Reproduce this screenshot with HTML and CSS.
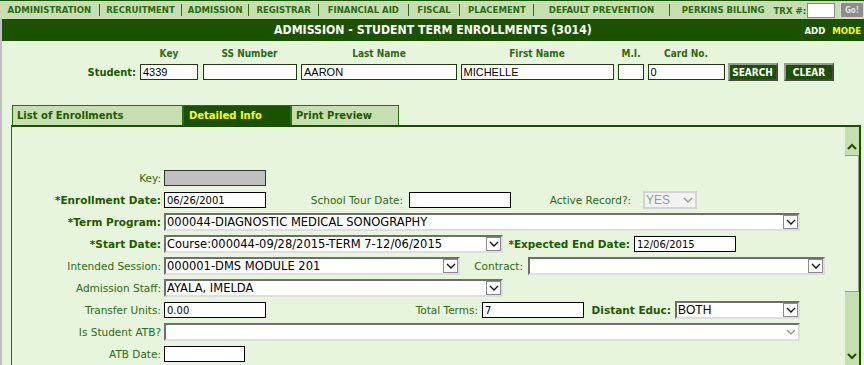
FILE: index.html
```html
<!DOCTYPE html>
<html lang="en">
<head>
  <meta charset="UTF-8">
  <title>Admission - Student Term Enrollments</title>
  <link rel="stylesheet" href="styles.css">
</head>
<body>

  <div class="topnav">
    <a class="nav-item sep">ADMINISTRATION</a>
    <a class="nav-item sep">RECRUITMENT</a>
    <a class="nav-item sep">ADMISSION</a>
    <a class="nav-item sep">REGISTRAR</a>
    <a class="nav-item sep">FINANCIAL AID</a>
    <a class="nav-item sep">FISCAL</a>
    <a class="nav-item sep">PLACEMENT</a>
    <a class="nav-item sep">DEFAULT PREVENTION</a>
    <a class="nav-item perkins">PERKINS BILLING</a>
    <span class="trx-label">TRX #:</span>
    <input class="trx-input" type="text">
    <button class="go-btn">Go!</button>
  </div>

  <div class="main">
    <div class="titlebar">
      <span></span>
      <h1>ADMISSION - STUDENT TERM ENROLLMENTS (3014)</h1>
      <span class="mode">ADD <b>MODE</b></span>
    </div>

    <div class="search">
      <span></span>
      <span class="col-head">Key</span>
      <span class="col-head">SS Number</span>
      <span class="col-head">Last Name</span>
      <span class="col-head">First Name</span>
      <span class="col-head">M.I.</span>
      <span class="col-head">Card No.</span>
      <span></span>
      <span></span>

      <label class="student-lbl">Student:</label>
      <input class="s-input s-key" type="text" value="4339">
      <input class="s-input s-ssn" type="text" value="">
      <input class="s-input s-last" type="text" value="AARON">
      <input class="s-input s-first" type="text" value="MICHELLE">
      <input class="s-input s-mi" type="text" value="">
      <input class="s-input s-card" type="text" value="0">
      <button class="dark-btn">SEARCH</button>
      <button class="dark-btn">CLEAR</button>
    </div>

    <div class="tabs">
      <div class="tab tab-list">List of Enrollments</div>
      <div class="tab tab-active">Detailed Info</div>
      <div class="tab tab-print">Print Preview</div>
    </div>

    <div class="panel">
      <div class="form">

        <div class="row">
          <label class="lbl">Key:</label>
          <input class="txt txt-gray" type="text" disabled>
        </div>

        <div class="row">
          <label class="lbl req">*Enrollment Date:</label>
          <input class="txt" type="text" value="06/26/2001">
          <label class="lbl2 l-tour">School Tour Date:</label>
          <input class="txt" type="text" value="">
          <label class="lbl2 l-active">Active Record?:</label>
          <div class="sel sel-active disabled">
            <span class="sel-val">YES</span>
            <span class="arrow flat"><svg width="10" height="6" viewBox="0 0 10 6"><path d="M1 1 L5 5 L9 1" fill="none" stroke="#999" stroke-width="1.4"/></svg></span>
          </div>
        </div>

        <div class="row">
          <label class="lbl req">*Term Program:</label>
          <div class="sel sel-full">
            <span class="sel-val">000044-DIAGNOSTIC MEDICAL SONOGRAPHY</span>
            <span class="arrow"><svg width="10" height="6" viewBox="0 0 10 6"><path d="M1 1 L5 5 L9 1" fill="none" stroke="#111" stroke-width="1.4"/></svg></span>
          </div>
        </div>

        <div class="row">
          <label class="lbl req">*Start Date:</label>
          <div class="sel sel-mid">
            <span class="sel-val">Course:000044-09/28/2015-TERM 7-12/06/2015</span>
            <span class="arrow"><svg width="10" height="6" viewBox="0 0 10 6"><path d="M1 1 L5 5 L9 1" fill="none" stroke="#111" stroke-width="1.4"/></svg></span>
          </div>
          <label class="lbl2 req l-end">*Expected End Date:</label>
          <input class="txt" type="text" value="12/06/2015">
        </div>

        <div class="row">
          <label class="lbl">Intended Session:</label>
          <div class="sel sel-session">
            <span class="sel-val">000001-DMS MODULE 201</span>
            <span class="arrow"><svg width="10" height="6" viewBox="0 0 10 6"><path d="M1 1 L5 5 L9 1" fill="none" stroke="#111" stroke-width="1.4"/></svg></span>
          </div>
          <label class="lbl2 l-contract">Contract:</label>
          <div class="sel sel-contract">
            <span class="sel-val"></span>
            <span class="arrow"><svg width="10" height="6" viewBox="0 0 10 6"><path d="M1 1 L5 5 L9 1" fill="none" stroke="#111" stroke-width="1.4"/></svg></span>
          </div>
        </div>

        <div class="row">
          <label class="lbl">Admission Staff:</label>
          <div class="sel sel-mid">
            <span class="sel-val">AYALA, IMELDA</span>
            <span class="arrow"><svg width="10" height="6" viewBox="0 0 10 6"><path d="M1 1 L5 5 L9 1" fill="none" stroke="#111" stroke-width="1.4"/></svg></span>
          </div>
        </div>

        <div class="row">
          <label class="lbl">Transfer Units:</label>
          <input class="txt" type="text" value="0.00">
          <label class="lbl2 l-terms">Total Terms:</label>
          <input class="txt" type="text" value="7">
          <label class="lbl2 req l-distant">Distant Educ:</label>
          <div class="sel sel-distant">
            <span class="sel-val arial">BOTH</span>
            <span class="arrow"><svg width="10" height="6" viewBox="0 0 10 6"><path d="M1 1 L5 5 L9 1" fill="none" stroke="#111" stroke-width="1.4"/></svg></span>
          </div>
        </div>

        <div class="row">
          <label class="lbl">Is Student ATB?</label>
          <div class="sel sel-full">
            <span class="sel-val"></span>
            <span class="arrow flat"><svg width="10" height="6" viewBox="0 0 10 6"><path d="M1 1 L5 5 L9 1" fill="none" stroke="#999" stroke-width="1.4"/></svg></span>
          </div>
        </div>

        <div class="row">
          <label class="lbl">ATB Date:</label>
          <input class="txt txt-short" type="text" value="">
        </div>

      </div>

      <div class="scrollbar">
        <div class="sb-up"><svg width="10" height="7" viewBox="0 0 10 7"><path d="M1 6 L5 2 L9 6" fill="none" stroke="#1a5200" stroke-width="2"/></svg></div>
        <div class="sb-thumb"></div>
        <div class="sb-track"></div>
        <div class="sb-down"><svg width="10" height="7" viewBox="0 0 10 7"><path d="M1 1 L5 5 L9 1" fill="none" stroke="#1a5200" stroke-width="2"/></svg></div>
      </div>
    </div>
  </div>

</body>
</html>
```

FILE: styles.css
```css
* {
  box-sizing: border-box;
}

body {
  margin: 0;
  height: 365px;
  overflow: hidden;
  display: flex;
  flex-direction: column;
  background-color: #e6f5dc;
  font-family: "DejaVu Sans", sans-serif;
}

/* top menu */
.topnav {
  height: 19px;
  display: flex;
  align-items: center;
  background-color: #c6dfb0;
  border-top: 1px solid #1a5200;
  font-family: "DejaVu Sans Condensed", "DejaVu Sans", sans-serif;
  font-size: 9.5px;
  font-weight: bold;
  color: #2d6b14;
  white-space: nowrap;
}

.nav-item {
  line-height: 12px;
  text-align: center;
}

.nav-item.sep {
  border-right: 1px solid #2d6b14;
}

.nav-item:nth-child(1) { width: 100px; }
.nav-item:nth-child(2) { width: 83px; }
.nav-item:nth-child(3) { width: 67px; }
.nav-item:nth-child(4) { width: 70px; }
.nav-item:nth-child(5) { width: 90px; }
.nav-item:nth-child(6) { width: 52px; }
.nav-item:nth-child(7) { width: 74px; }
.nav-item:nth-child(8) { width: 136px; }

.nav-item.perkins {
  padding: 0 9px 0 12px;
  text-align: left;
}

.trx-label {
  margin-right: 1px;
}

.trx-input {
  width: 28px;
  height: 15px;
  border: 1px solid #888;
  background: #fff;
  padding: 0;
}

.go-btn {
  width: 24px;
  height: 16px;
  margin-left: 5px;
  padding: 0;
  background-color: #8c8c8c;
  border: 1px solid #ddd;
  color: #e0e0e0;
  font-family: inherit;
  font-size: 8px;
  font-weight: bold;
}

.main {
  flex: 1;
  display: flex;
  flex-direction: column;
  border-left: 2px solid #c0c0c0;
}

/* title */
.titlebar {
  height: 22px;
  display: grid;
  grid-template-columns: 1fr auto 1fr;
  align-items: center;
  background-color: #1a5200;
  color: #fff;
}

.titlebar h1 {
  margin: 0;
  font-family: "DejaVu Sans Condensed", "DejaVu Sans", sans-serif;
  font-size: 12.2px;
  font-weight: bold;
}

.mode {
  justify-self: end;
  padding-right: 3px;
  font-family: "DejaVu Sans Condensed", "DejaVu Sans", sans-serif;
  font-size: 9.5px;
  font-weight: bold;
}

.mode b {
  color: #ffff00;
  margin-left: 4px;
}

/* student search */
.search {
  display: grid;
  grid-template-columns: 136px 62px 99px 160px 156px 32px 78px 55px 58px;
  grid-template-rows: 12px 18px;
  row-gap: 4px;
  align-items: center;
  justify-items: center;
  padding-top: 6px;
  font-family: "DejaVu Sans Condensed", "DejaVu Sans", sans-serif;
}

.col-head {
  font-size: 10px;
  font-weight: bold;
  color: #2d6b14;
}

.student-lbl {
  justify-self: end;
  padding-right: 2px;
  font-size: 11px;
  font-weight: bold;
  color: #1f5a00;
}

.s-input {
  height: 16px;
  padding: 0 2px;
  border: 1px solid #1f3a10;
  background: #fff;
  font-family: "Liberation Sans", Arial, sans-serif;
  font-size: 11px;
}

.s-key { width: 58px; }
.s-ssn { width: 94px; }
.s-last { width: 156px; }
.s-first { width: 153px; }
.s-mi { width: 26px; }
.s-card { width: 77px; }

.dark-btn {
  width: 50px;
  height: 18px;
  padding: 0;
  background-color: #1a5200;
  border: 2px outset #9a9a9a;
  color: #fff;
  font-family: inherit;
  font-size: 10px;
  font-weight: bold;
}

/* tabs */
.tabs {
  display: flex;
  margin-top: 24px;
  margin-left: 10px;
  height: 20px;
}

.tab {
  height: 20px;
  padding: 4px 0 0 4px;
  border: 1px solid #2d6b14;
  border-bottom: none;
  background-color: #c6dfb0;
  color: #1f5a00;
  font-size: 10px;
  font-weight: bold;
}

.tab-list { width: 171px; }
.tab-active {
  width: 108px;
  background-color: #1a5200;
  color: #ffff00;
  padding-left: 5px;
}
.tab-print { width: 108px; }

/* panel */
.panel {
  flex: 1;
  display: flex;
  width: 850px;
  margin-left: 9px;
  border-top: 2px solid #1a5200;
  border-left: 1px solid #2d6b14;
  border-right: 2px solid #1a5200;
}

.form {
  flex: 1;
  padding-top: 40px;
}

.row {
  height: 22px;
  display: flex;
  align-items: center;
}

.lbl,
.lbl2 {
  text-align: right;
  font-size: 10.5px;
  color: #2d6b14;
  white-space: nowrap;
}

.lbl {
  width: 152px;
  padding-right: 3px;
}

.req {
  font-weight: bold;
  color: #1f5a00;
}

.l-tour { width: 143px; padding-right: 6px; }
.l-active { width: 132px; padding-right: 12px; }
.l-end { width: 131px; padding-right: 4px; }
.l-contract { width: 68px; padding-right: 5px; }
.l-terms { width: 216px; padding-right: 4px; }
.l-distant { width: 91px; padding-right: 4px; }

.txt {
  width: 102px;
  height: 16px;
  padding: 0 2px;
  border: 1px solid #000;
  background: #fff;
  font-family: "DejaVu Sans", sans-serif;
  font-size: 10px;
  color: #000;
}

.txt-gray {
  background-color: #c0c0c0;
  border-color: #333;
}

.txt-short {
  width: 81px;
}

/* select boxes */
.sel {
  height: 18px;
  display: flex;
  align-items: center;
  background: #fff;
  border-top: 2px solid #6e6e6e;
  border-left: 2px solid #6e6e6e;
  border-right: 2px solid #dedede;
  border-bottom: 2px solid #dedede;
}

.sel-val {
  flex: 1;
  padding-left: 1px;
  overflow: hidden;
  white-space: nowrap;
  font-family: "DejaVu Sans", Verdana, sans-serif;
  font-size: 11.5px;
  color: #000;
}

.sel-val.arial {
  font-family: "Liberation Sans", Arial, sans-serif;
  font-size: 12px;
}

.arrow {
  width: 15px;
  height: 14px;
  display: flex;
  align-items: center;
  justify-content: center;
  border: 1px solid #8a8a8a;
  background: #fff;
}

.arrow.flat {
  border-color: transparent;
}

.sel-full { width: 636px; }
.sel-mid { width: 339px; }
.sel-session { width: 296px; }
.sel-contract { width: 297px; }
.sel-distant { width: 125px; }
.sel-active { width: 54px; }

.sel.disabled {
  border-color: #d4d4d4;
  background: #f2f2f2;
}

.sel.disabled .sel-val {
  font-family: "Liberation Sans", Arial, sans-serif;
  font-size: 12px;
  color: #999;
}

.sel.disabled .arrow {
  background: transparent;
}

/* scrollbar */
.scrollbar {
  width: 14px;
  display: flex;
  flex-direction: column;
  background-color: #c6dfb0;
}

.sb-up {
  height: 28px;
  display: flex;
  align-items: flex-end;
  justify-content: center;
  padding-bottom: 5px;
}

.sb-thumb {
  height: 137px;
  background-color: #e6f5dc;
  border-top: 1px solid #999;
  border-right: 1px solid #999;
  border-bottom: 1px solid #999;
}

.sb-track {
  flex: 1;
}

.sb-down {
  height: 14px;
  display: flex;
  justify-content: center;
  padding-top: 2px;
}
```
